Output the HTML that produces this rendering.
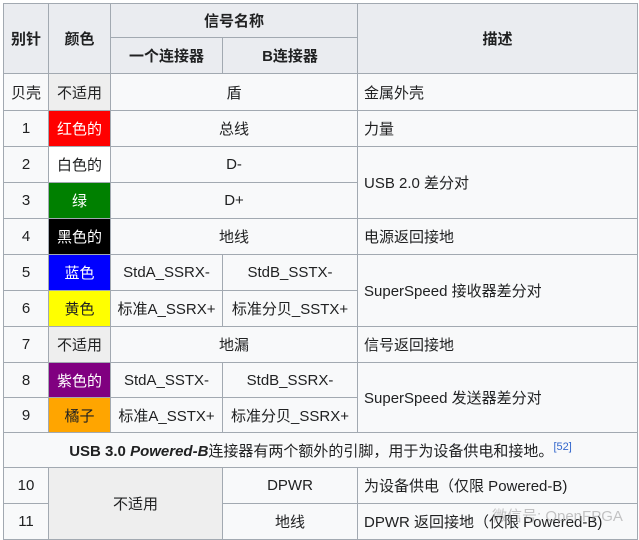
<!DOCTYPE html>
<html><head><meta charset="utf-8"><style>
html,body{margin:0;padding:0;background:#fff;width:639px;height:540px;overflow:hidden;position:relative}
table{position:absolute;left:3px;top:3px;border-collapse:collapse;table-layout:fixed;width:634px;
font-family:"Liberation Sans","Noto Sans CJK SC",sans-serif;font-size:15px;color:#202122;background:#f8f9fa}
td,th{border:1px solid #a2a9b1;padding:0 6px;text-align:center;overflow:hidden;white-space:nowrap}
th{background:#eaecf0;font-weight:bold}
td.l{text-align:left}
.na{background:#eeeeee}
.w{color:#fff}
.note{font-weight:bold}
sup{font-weight:normal;color:#3366cc;font-size:11px}
.wm{position:absolute;left:492px;top:505px;font-family:"Liberation Sans","Noto Sans CJK SC",sans-serif;font-size:15px;color:rgba(150,150,150,0.55)}
</style></head><body>
<table>
<colgroup><col style="width:45px"><col style="width:62px"><col style="width:112px"><col style="width:135px"><col style="width:280px"></colgroup>
<tr style="height:34px"><th rowspan="2">别针</th><th rowspan="2">颜色</th><th colspan="2">信号名称</th><th rowspan="2">描述</th></tr>
<tr style="height:36px"><th>一个连接器</th><th>B连接器</th></tr>
<tr style="height:37px"><td>贝壳</td><td class="na">不适用</td><td colspan="2">盾</td><td class="l">金属外壳</td></tr>
<tr style="height:36px"><td>1</td><td class="w" style="background:#ff0000">红色的</td><td colspan="2">总线</td><td class="l">力量</td></tr>
<tr style="height:36px"><td>2</td><td style="background:#fff">白色的</td><td colspan="2">D-</td><td class="l" rowspan="2">USB 2.0 差分对</td></tr>
<tr style="height:36px"><td>3</td><td class="w" style="background:#008000">绿</td><td colspan="2">D+</td></tr>
<tr style="height:36px"><td>4</td><td class="w" style="background:#000">黑色的</td><td colspan="2">地线</td><td class="l">电源返回接地</td></tr>
<tr style="height:36px"><td>5</td><td class="w" style="background:#0000ff">蓝色</td><td>StdA_SSRX-</td><td>StdB_SSTX-</td><td class="l" rowspan="2">SuperSpeed 接收器差分对</td></tr>
<tr style="height:36px"><td>6</td><td style="background:#ffff00">黄色</td><td style="padding:0 2px">标准A_SSRX+</td><td style="padding:0 2px">标准分贝_SSTX+</td></tr>
<tr style="height:36px"><td>7</td><td class="na">不适用</td><td colspan="2">地漏</td><td class="l">信号返回接地</td></tr>
<tr style="height:35px"><td>8</td><td class="w" style="background:#800080">紫色的</td><td>StdA_SSTX-</td><td>StdB_SSRX-</td><td class="l" rowspan="2">SuperSpeed 发送器差分对</td></tr>
<tr style="height:35px"><td>9</td><td style="background:#ffa500">橘子</td><td style="padding:0 2px">标准A_SSTX+</td><td style="padding:0 2px">标准分贝_SSRX+</td></tr>
<tr style="height:35px"><td colspan="5" class="note">USB 3.0 <i>Powered-B</i><span style="font-weight:normal">连接器有两个额外的引脚，用于为设备供电和接地。</span><sup>[52]</sup></td></tr>
<tr style="height:36px"><td>10</td><td class="na" colspan="2" rowspan="2">不适用</td><td>DPWR</td><td class="l">为设备供电（仅限 Powered-B)</td></tr>
<tr style="height:36px"><td>11</td><td>地线</td><td class="l">DPWR 返回接地（仅限 Powered-B)</td></tr>
</table>
<div class="wm">微信号: OpenFPGA</div>
</body></html>
